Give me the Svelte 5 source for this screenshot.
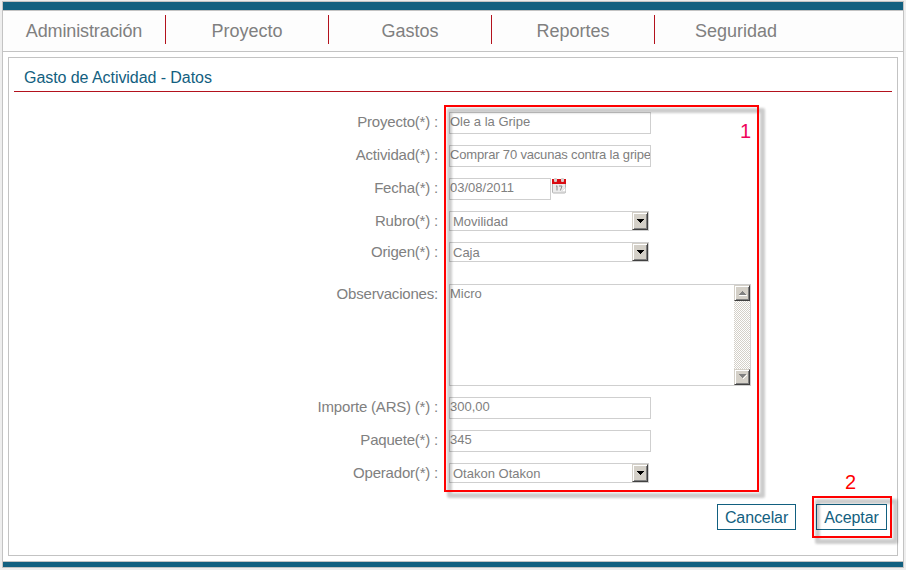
<script>
  const menu = ['Administración', 'Proyecto', 'Gastos', 'Reportes', 'Seguridad'];
  const rows = [
    { label: 'Proyecto(*) :', kind: 'text', value: 'Ole a la Gripe' },
    { label: 'Actividad(*) :', kind: 'text tight', value: 'Comprar 70 vacunas contra la gripe' },
    { label: 'Fecha(*) :', kind: 'date', value: '03/08/2011' },
    { label: 'Rubro(*) :', kind: 'select', value: 'Movilidad' },
    { label: 'Origen(*) :', kind: 'select', value: 'Caja' },
    { label: 'Observaciones:', kind: 'area', value: 'Micro' },
    { label: 'Importe (ARS) (*) :', kind: 'text', value: '300,00' },
    { label: 'Paquete(*) :', kind: 'text', value: '345' },
    { label: 'Operador(*) :', kind: 'select', value: 'Otakon Otakon' }
  ];
</script>

<div class="screen">
  <div class="page">
    <div class="bar top"></div>
    <nav>
      {#each menu as item}
        <span class="item">{item}</span>
      {/each}
    </nav>
    <main>
      <h1>Gasto de Actividad - Datos</h1>
      <form>
        {#each rows as row}
          <div class="row {row.kind}">
            <span class="label">{row.label}</span>
            {#if row.kind === 'select'}
              <div class="combo">
                <span>{row.value}</span>
                <i class="btn"><svg width="7" height="4" shape-rendering="crispEdges"><path d="M0 0h7v1H0zM1 1h5v1H1zM2 2h3v1H2zM3 3h1v1H3z" fill="#000" /></svg></i>
              </div>
            {:else if row.kind === 'area'}
              <div class="textarea">
                <span>{row.value}</span>
                <div class="scroll">
                  <i class="btn"><svg width="9" height="6" shape-rendering="crispEdges"><path d="M4 1h1v1H4zM3 2h3v1H3zM2 3h5v1H2zM1 4h7v1H1z" fill="#808080" /><path d="M1 5h8v1H1z" fill="#fff" /></svg></i>
                  <i class="btn"><svg width="9" height="6" shape-rendering="crispEdges"><path d="M8 1h1v1H8zM7 2h1v1H7zM6 3h1v1H6zM5 4h1v1H5z" fill="#fff" /><path d="M1 0h7v1H1zM2 1h5v1H2zM3 2h3v1H3zM4 3h1v1H4z" fill="#808080" /></svg></i>
                </div>
              </div>
            {:else}
              <div class="input">{row.value}</div>
              {#if row.kind === 'date'}
                <svg class="cal" width="15" height="16" viewBox="0 0 15 16">
                  <rect x="0.5" y="5" width="13" height="10" rx="1" fill="#ececec" stroke="#b5b5b5" />
                  <rect x="0" y="1" width="14" height="5" fill="#d90c12" />
                  <rect x="2" y="0" width="3" height="4" rx="1" fill="#d5cccc" />
                  <rect x="9" y="0" width="3" height="4" rx="1" fill="#d5cccc" />
                  <path d="M4 8.5l1-.8v4.8M7 8h3l-1.6 4.5" fill="none" stroke="#8a8a8a" />
                  <path d="M9.5 13.5l4-4v4z" fill="#fff" stroke="#ccc" stroke-width=".5" />
                </svg>
              {/if}
            {/if}
          </div>
        {/each}
      </form>
      <div class="actions">
        <span class="button cancel">Cancelar</span>
        <span class="button accept">Aceptar</span>
      </div>
    </main>
    <div class="bar bottom"></div>
  </div>
  <div class="mark one"></div>
  <div class="mark two"></div>
  <span class="num n1">1</span>
  <span class="num n2">2</span>
</div>

<style>
  :global(body) { background: #eee; }
  .screen {
    position: relative;
    box-sizing: border-box;
    width: 906px;
    height: 570px;
    padding: 1px 2px 2px;
    overflow: hidden;
    background: #eee;
    font-family: "Liberation Sans", Arial, sans-serif;
    color: #808080;
  }
  .page {
    box-sizing: border-box;
    width: 902px;
    height: 567px;
    border: 1px solid #c3c3c3;
    background: #fff;
    display: flex;
    flex-direction: column;
  }
  .bar { background: #126080; flex: none; }
  .top { height: 8px; border-bottom: 1px solid #c3c3c3; }
  .bottom { height: 5px; border-top: 1px solid #c3c3c3; margin-top: 5px; }
  nav {
    display: flex;
    box-sizing: border-box;
    height: 41px;
    padding-top: 4px;
    border-bottom: 1px solid #c3c3c3;
    background: #fdfdfd;
    flex: none;
  }
  .item {
    box-sizing: border-box;
    width: 163px;
    height: 29px;
    line-height: 33px;
    text-align: center;
    font-size: 18px;
    border-right: 1px solid #b3121d;
  }
  .item:first-child { letter-spacing: -0.12px; }
  .item:last-child { border-right-color: transparent; }
  main {
    box-sizing: border-box;
    margin: 5px 5px 0;
    width: 890px;
    height: 499px;
    border: 1px solid #c3c3c3;
    padding: 0 5px;
    flex: none;
  }
  h1 {
    margin: 0;
    height: 33px;
    padding-left: 10px;
    line-height: 40px;
    font-size: 16px;
    font-weight: normal;
    letter-spacing: -0.06px;
    color: #126080;
    border-bottom: 1px solid #b3121d;
  }
  form { padding-top: 20px; }
  .row { display: flex; align-items: flex-start; height: 33px; }
  .row.select:nth-child(4) { height: 31px; }
  .row.select:nth-child(5) { height: 42px; }
  .row.area { height: 113px; }
  .row.select:last-child { height: 20px; }
  .label {
    width: 424px;
    margin-right: 11px;
    text-align: right;
    font-size: 15px;
    letter-spacing: -0.2px;
    line-height: 20px;
    white-space: nowrap;
  }
  .input, .combo, .textarea {
    box-sizing: border-box;
    border: 1px solid #cfcfcf;
    background: #fff;
    font-size: 13px;
    white-space: nowrap;
    overflow: hidden;
  }
  .input { width: 202px; height: 22px; line-height: 18px; }
  .tight .input { letter-spacing: -0.17px; }
  .date .input { width: 102px; }
  .cal { margin-left: 1px; }
  .combo {
    width: 200px;
    height: 20px;
    padding-left: 3px;
    line-height: 20px;
    display: flex;
    justify-content: space-between;
  }
  .btn {
    box-sizing: border-box;
    width: 16px;
    height: 18px;
    display: flex;
    align-items: center;
    justify-content: center;
    background: #d4d0c8;
    border: 1px solid;
    border-color: #d4d0c8 #404040 #404040 #d4d0c8;
    box-shadow: inset 1px 1px #fff, inset -1px -1px #808080;
  }
  .textarea {
    width: 302px;
    height: 102px;
    line-height: 18px;
    display: flex;
    justify-content: space-between;
  }
  .scroll {
    width: 16px;
    height: 100px;
    display: flex;
    flex-direction: column;
    justify-content: space-between;
    background: repeating-conic-gradient(#d4d0c8 0 25%, #fff 0 50%) 0 0 / 2px 2px;
  }
  .scroll .btn { height: 16px; }
  .actions {
    display: flex;
    justify-content: flex-end;
    gap: 20px;
    padding: 21px 5px 0 0;
  }
  .button {
    box-sizing: border-box;
    width: 79px;
    height: 26px;
    border: 1px solid #126080;
    text-align: center;
    font-size: 16px;
    letter-spacing: -0.1px;
    line-height: 25px;
    color: #126080;
  }
  .accept { width: 71px; }
  .mark { position: absolute; }
  .mark::before {
    content: "";
    position: absolute;
    inset: 3px -6px -6px 3px;
    border: 5px solid rgba(0, 0, 0, 0.2);
    border-radius: 2px;
    filter: blur(1.3px);
  }
  .mark::after {
    content: "";
    position: absolute;
    inset: 0;
    border: 2px solid #f00;
  }
  .one { left: 444px; top: 105px; width: 315px; height: 387px; }
  .two { left: 812px; top: 496px; width: 80px; height: 42px; }
  .num { position: absolute; font-size: 20px; line-height: 22px; color: #f00; }
  .n1 { left: 740px; top: 120px; color: #f0045c; }
  .n2 { left: 845px; top: 471px; }
</style>
